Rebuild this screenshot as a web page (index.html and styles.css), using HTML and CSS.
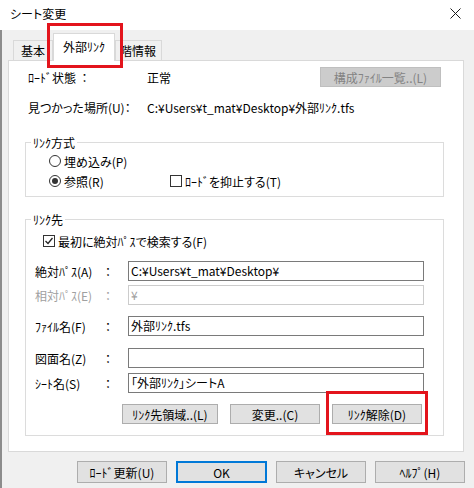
FILE: index.html
```html
<!DOCTYPE html>
<html lang="ja">
<head>
    <meta charset="utf-8">
    <title>シート変更</title>
    <link rel="stylesheet" href="styles.css">
</head>
<body>
<div class="window">

    <div class="titlebar">
        <span class="title">シート変更</span>
        <svg class="close" width="11" height="11" viewBox="0 0 11 11">
            <path d="M0.5 0.5 L10.5 10.5 M10.5 0.5 L0.5 10.5" stroke="#1a1a1a" stroke-width="1" fill="none"/>
        </svg>
    </div>

    <div class="main">
        <div class="tabs">
            <div class="tab tab-base">基本</div>
            <div class="tab tab-link active">外部ﾘﾝｸ</div>
            <div class="tab tab-info">階情報</div>
        </div>

        <div class="panel">
            <div class="row">
                <span class="key">ﾛｰﾄﾞ状態 &nbsp;：</span>
                <span>正常</span>
                <button class="btn btn-list" disabled>構成ﾌｧｲﾙ一覧..(L)</button>
            </div>
            <div class="row">
                <span class="key">見つかった場所(U)：</span>
                <span>C:¥Users¥t_mat¥Desktop¥外部ﾘﾝｸ.tfs</span>
            </div>

            <fieldset class="group group-mode">
                <legend>ﾘﾝｸ方式</legend>
                <div class="opts">
                    <div class="opt-row">
                        <span class="choice"><span class="radio"></span>埋め込み(P)</span>
                    </div>
                    <div class="opt-row">
                        <span class="choice choice-ref"><span class="radio on"></span>参照(R)</span>
                        <span class="choice"><span class="check"></span>ﾛｰﾄﾞを抑止する(T)</span>
                    </div>
                </div>
            </fieldset>

            <fieldset class="group group-dest">
                <legend>ﾘﾝｸ先</legend>
                <div class="check-row">
                    <span class="choice">
                        <span class="check">
                            <svg width="10" height="10" viewBox="0 0 10 10"><path d="M1.5 5 L4 7.5 L8.5 2" stroke="#222" stroke-width="1.3" fill="none"/></svg>
                        </span>最初に絶対ﾊﾟｽで検索する(F)
                    </span>
                </div>

                <div class="frow first">
                    <span class="name">絶対ﾊﾟｽ(A)</span><span class="colon">：</span>
                    <div class="field">C:¥Users¥t_mat¥Desktop¥</div>
                </div>
                <div class="frow near off">
                    <span class="name">相対ﾊﾟｽ(E)</span><span class="colon">：</span>
                    <div class="field">¥</div>
                </div>
                <div class="frow far">
                    <span class="name">ﾌｧｲﾙ名(F)</span><span class="colon">：</span>
                    <div class="field">外部ﾘﾝｸ.tfs</div>
                </div>
                <div class="frow farther">
                    <span class="name">図面名(Z)</span><span class="colon">：</span>
                    <div class="field"></div>
                </div>
                <div class="frow close-row">
                    <span class="name">ｼｰﾄ名(S)</span><span class="colon">：</span>
                    <div class="field">「外部ﾘﾝｸ」シートA</div>
                </div>

                <div class="actions">
                    <button class="btn btn-area">ﾘﾝｸ先領域..(L)</button>
                    <button class="btn btn-mid">変更..(C)</button>
                    <button class="btn btn-mid">ﾘﾝｸ解除(D)</button>
                </div>
            </fieldset>
        </div>

        <div class="footer">
            <button class="btn btn-foot">ﾛｰﾄﾞ更新(U)</button>
            <button class="btn btn-foot btn-ok">OK</button>
            <button class="btn btn-foot">キャンセル</button>
            <button class="btn btn-foot">ﾍﾙﾌﾟ(H)</button>
        </div>
    </div>

    <!-- encadrés rouges d'annotation -->
    <div class="mark mark-tab"></div>
    <div class="mark mark-unlink"></div>
</div>
</body>
</html>
```

FILE: styles.css
```css
body {
    margin: 0;
    background: #f0f0f0;
    font-family: "Noto Sans CJK JP", "Noto Sans", sans-serif;
    font-size: 12px;
    line-height: 17px;
    font-feature-settings: "palt";
    color: #000;
}

div.window {
    position: relative;
    width: 474px;
    height: 488px;
    overflow: hidden;
}

div.titlebar {
    height: 30px;
    box-sizing: border-box;
    background: #fff;
    display: flex;
    align-items: center;
    justify-content: space-between;
    padding: 0 13px 3px 10px;
}

div.main {
    border-left: 2px solid #8c8c8c;
    height: 458px;
    box-sizing: border-box;
}

/* onglets */
div.tabs {
    display: flex;
    align-items: flex-end;
    height: 30px;
    margin-left: 11px;
}

div.tab {
    height: 20px;
    box-sizing: border-box;
    border: 1px solid #d9d9d9;
    border-bottom: none;
    background: #f0f0f0;
    display: flex;
    align-items: center;
    justify-content: center;
}

div.tab.tab-base { width: 40px; }

div.tab.tab-info {
    width: 47px;
    justify-content: flex-start;
    padding-left: 4px;
}

div.tab.active {
    width: 62px;
    height: 28px;
    margin-bottom: -1px;
    background: #fff;
    position: relative;
    z-index: 1;
    align-items: flex-start;
    padding-top: 4px;
}

/* page */
div.panel {
    margin-left: 6px;
    width: 456px;
    box-sizing: border-box;
    background: #fff;
    border: 1px solid #d9d9d9;
    padding: 6px 19px 15px 16px;
}

div.row {
    display: flex;
    align-items: center;
    height: 20px;
    padding: 0 3px;
}

div.row + div.row {
    margin-top: 10px;
}

div.row span.key {
    width: 119px;
}

button.btn {
    height: 20px;
    box-sizing: border-box;
    border: 1px solid #adadad;
    background: #e1e1e1;
    font: inherit;
    color: #000;
    padding: 0;
}

button.btn-list {
    margin-left: auto;
    width: 121px;
    background: #cccccc;
    border-color: #bfbfbf;
    color: #838383;
}

fieldset.group {
    border: 1px solid #dcdcdc;
    margin: 17px 0 0;
    padding: 0;
    min-width: 0;
}

fieldset.group legend {
    margin-left: 5px;
    padding: 0 2px;
    line-height: 17px;
}

fieldset.group-dest {
    margin-top: 14px;
    padding-bottom: 11px;
}

div.opts {
    padding: 0 0 5px 23px;
}

div.opt-row {
    display: flex;
    align-items: center;
    height: 20px;
}

span.choice {
    display: flex;
    align-items: center;
    gap: 3px;
}

span.choice-ref {
    width: 121px;
}

span.radio {
    width: 12px;
    height: 12px;
    box-sizing: border-box;
    border: 1px solid #333;
    border-radius: 50%;
    background: #fff;
    display: flex;
    align-items: center;
    justify-content: center;
}

span.radio.on::after {
    content: "";
    width: 6px;
    height: 6px;
    border-radius: 50%;
    background: #333;
}

span.check {
    width: 12px;
    height: 12px;
    box-sizing: border-box;
    border: 1px solid #333;
    background: #fff;
    display: flex;
    align-items: center;
    justify-content: center;
}

div.check-row {
    display: flex;
    align-items: center;
    height: 20px;
    padding: 3px 0 0 17px;
}

/* lignes du formulaire */
div.frow {
    display: flex;
    align-items: center;
    padding-left: 9px;
}

div.frow span.name { width: 66px; }

div.frow span.colon {
    width: 23px;
    padding-left: 4px;
}

div.frow.first    { margin-top: 10px; }
div.frow.near     { margin-top: 4px; }
div.frow.far      { margin-top: 11px; }
div.frow.farther  { margin-top: 12px; }
div.frow.close-row { margin-top: 5px; }

div.field {
    width: 296px;
    height: 20px;
    box-sizing: border-box;
    border: 1px solid #7a7a7a;
    padding-left: 2px;
    line-height: 18px;
    white-space: nowrap;
}

div.frow.off {
    color: #a0a0a0;
}

div.frow.off div.field {
    border-color: #cccccc;
}

div.actions {
    display: flex;
    justify-content: flex-end;
    gap: 12px;
    padding-right: 21px;
    margin-top: 11px;
}

button.btn-area { width: 96px; }
button.btn-mid  { width: 90px; }

/* boutons du bas */
div.footer {
    display: flex;
    justify-content: flex-end;
    gap: 9px;
    margin-top: 9px;
    padding-right: 9px;
}

button.btn-foot {
    width: 90px;
    height: 22px;
}

button.btn-ok {
    width: 91px;
    border: 2px solid #0078d7;
}

/* annotations */
div.mark {
    position: absolute;
    border: 3px solid #e3141c;
    box-sizing: border-box;
    z-index: 2;
}

div.mark-tab {
    left: 47px;
    top: 23px;
    width: 76px;
    height: 45px;
}

div.mark-unlink {
    left: 326px;
    top: 391px;
    width: 102px;
    height: 44px;
}
```
